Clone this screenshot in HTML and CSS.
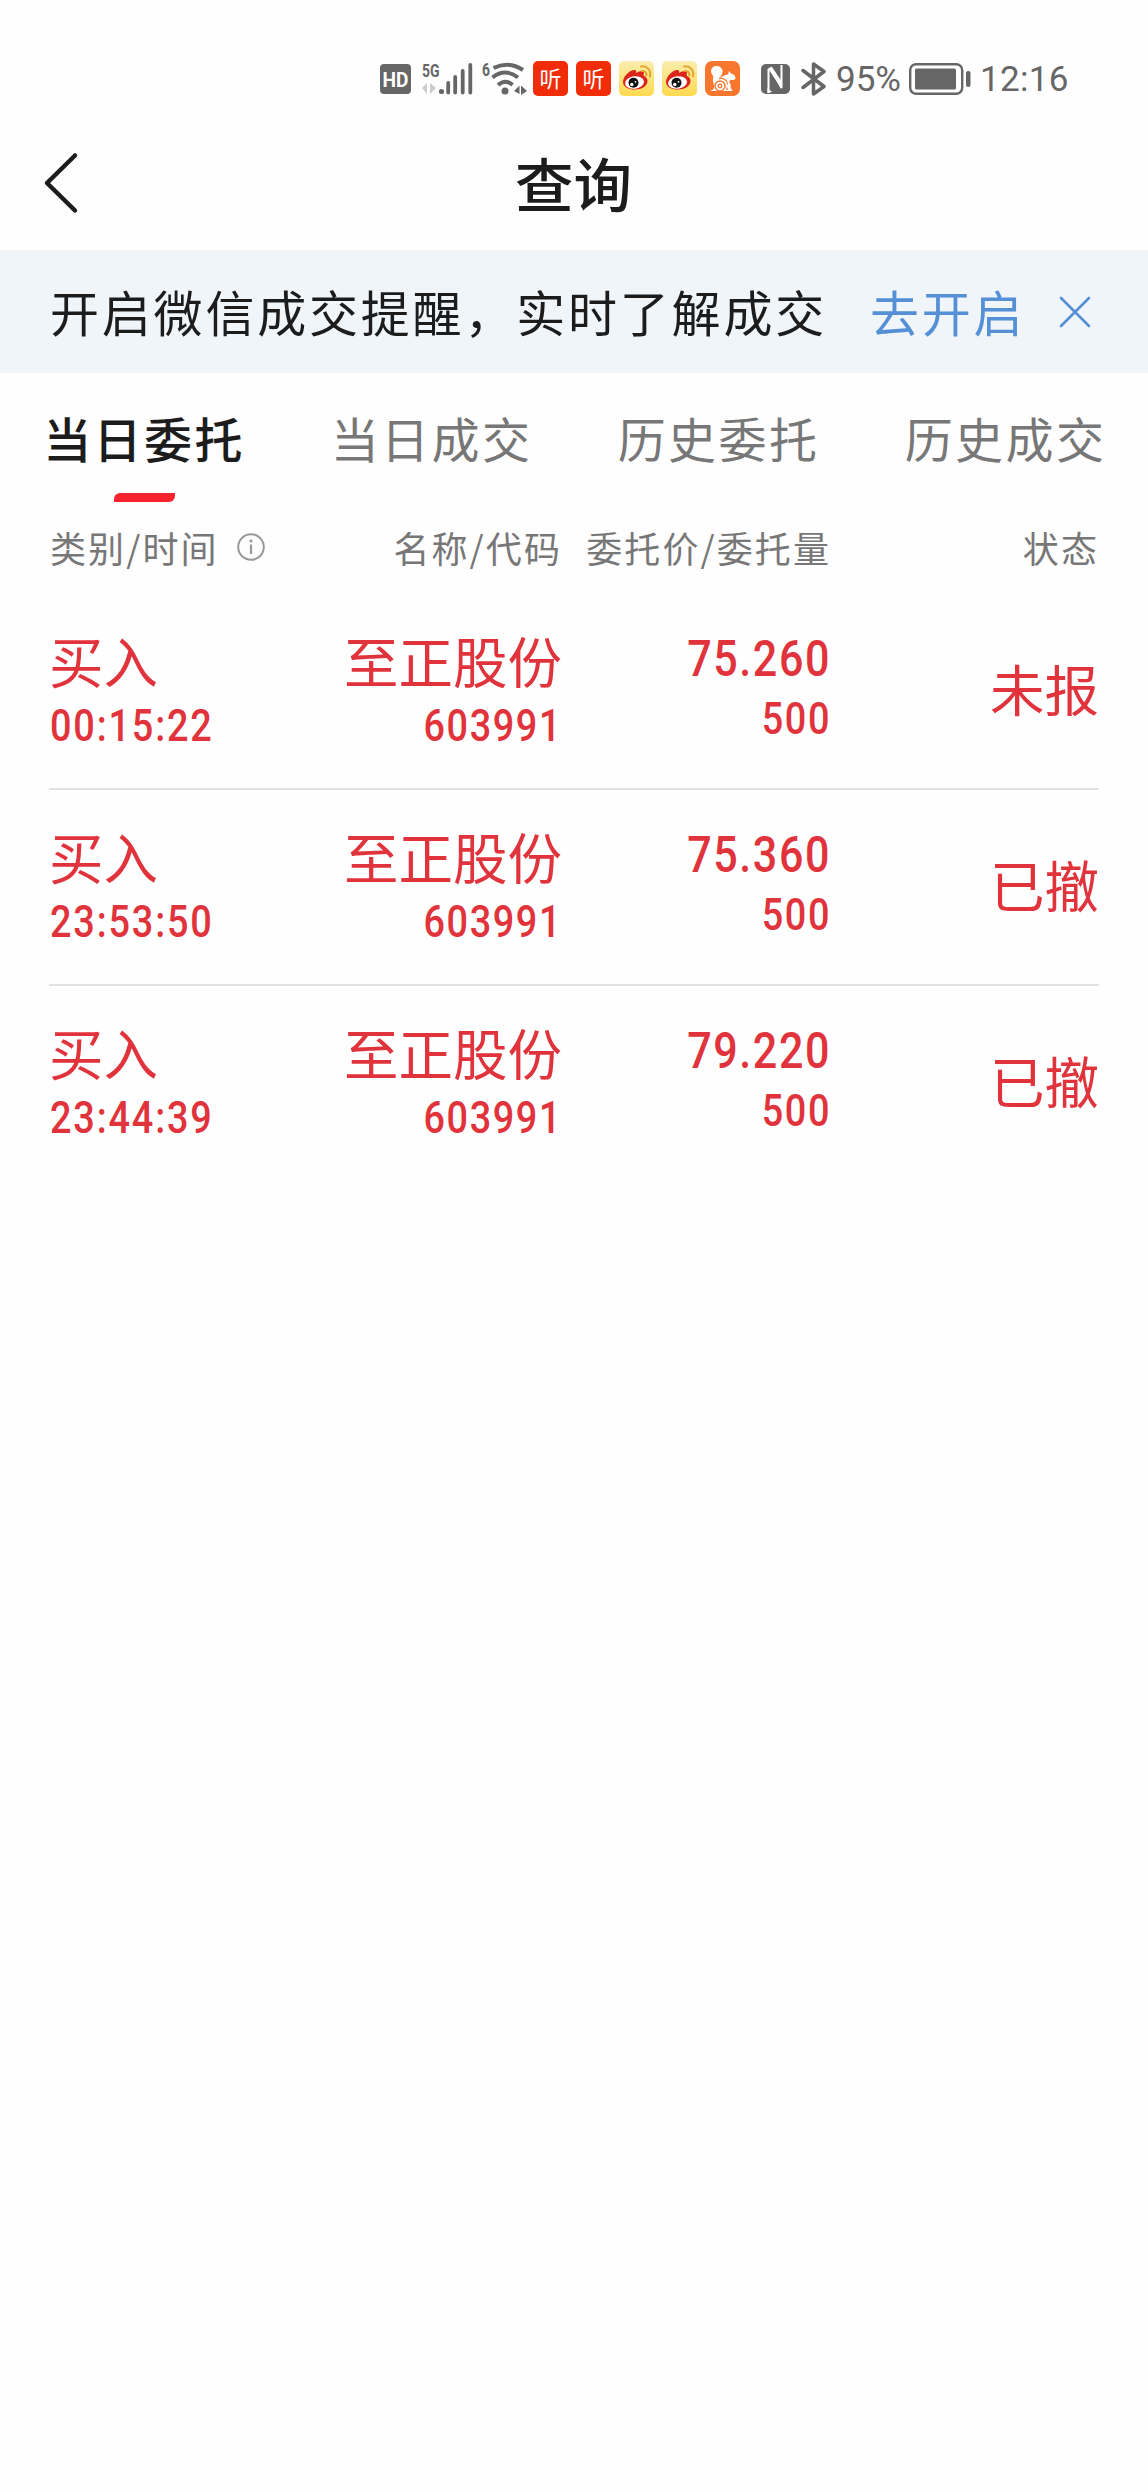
FILE: index.html
```html
<!DOCTYPE html>
<html lang="zh-CN">
<head>
  <meta charset="UTF-8" />
  <meta name="viewport" content="width=device-width, initial-scale=1.0" />
  <title>查询</title>
  <link rel="stylesheet" href="styles.css">
</head>
<body>
  <div class="status-bar">
    <svg class="network" width="148" height="40" viewBox="380 58 148 40">
      <rect x="380" y="63" width="31" height="30" rx="4" fill="#666"/>
      <text x="395.5" y="85.5" class="hd" textLength="26" lengthAdjust="spacingAndGlyphs">HD</text>
      <text x="422" y="76" class="net" textLength="17.5" lengthAdjust="spacingAndGlyphs">5G</text>
      <path d="M422 87l5-5v11M430 82v11l6-6" fill="#ccc"/>
      <circle cx="441.5" cy="90.500" r="2.600" fill="#666"/>
      <path d="M448.200 82v9.500M455.200 76v15.500M462.700 70v21.500M470.300 64v27.500" stroke="#666" stroke-width="3.800" stroke-linecap="round"/>
      <text x="482" y="75" class="net" textLength="8" lengthAdjust="spacingAndGlyphs">6</text>
      <g fill="none" stroke="#666" stroke-width="4">
        <path d="M493.500 67Q508.500 59.500 523 69"/>
        <path d="M492.500 76.500Q505 66.500 518 76.500"/>
        <path d="M498 84Q505.500 77.500 512.500 84"/>
      </g>
      <circle cx="505" cy="90" r="3.500" fill="#666"/>
      <path d="M514 90l5.500-5.500v8.500zM521 84.500l6 5.500-6 4z" fill="#666"/>
    </svg>
    <div class="apps">
      <svg width="35" height="35" viewBox="0 0 35 35">
        <rect width="35" height="35" rx="5" fill="#f12c08"/>
        <text x="17.500" y="25.800" class="ting">听</text>
      </svg>
      <svg width="35" height="35" viewBox="0 0 35 35">
        <rect width="35" height="35" rx="5" fill="#f12c08"/>
        <text x="17.500" y="25.800" class="ting">听</text>
      </svg>
      <svg width="35" height="35" viewBox="0 0 35 35">
        <defs>
          <linearGradient id="gold" x1="0" y1="0" x2="0" y2="1">
            <stop offset="0" stop-color="#f9eeb0"/>
            <stop offset="1" stop-color="#ffd94e"/>
          </linearGradient>
          <g id="weibo">
            <rect width="35" height="35" rx="5" fill="url(#gold)"/>
            <path d="M4 21C4 15 12 8 16 9c2 .5 1 3 1 3 3-2 8-3 8-.500 0 1.500-1 2.500 0 3.500 2 1 3.500 2.500 3.500 5 0 5-6 8.500-12.500 8.500S4 26 4 21z" fill="#dc241b"/>
            <ellipse cx="15.500" cy="21.500" rx="9.500" ry="6.300" fill="#fff" transform="rotate(-7 15.500 21.500)"/>
            <circle cx="14.500" cy="21.800" r="5" fill="#111"/>
            <circle cx="12.800" cy="23.500" r="1.700" fill="#fff"/>
            <circle cx="16.500" cy="20.800" r=".9" fill="#fff"/>
            <path d="M22 5.500c6-1 10.500 4 9 10M23 10c3-.5 5 2 4.200 4.500" fill="none" stroke="#e5a52c" stroke-width="2" stroke-linecap="round"/>
          </g>
        </defs>
        <use href="#weibo"/>
      </svg>
      <svg width="35" height="35" viewBox="0 0 35 35"><use href="#weibo"/></svg>
      <svg width="35" height="35" viewBox="0 0 35 35">
        <rect width="35" height="35" rx="7" fill="#f9762e"/>
        <path d="M5 30c3-.5 4.500-2.500 4-5.500-.5-2.500-1.500-4-1-6.500.3-1.500.7-2.500-.5-4-1.500-2-2-4-1-6C7.500 5.500 10 4.500 12.500 5c3.500.5 5.500 3.500 5 6.500-.5 2.500-2.500 4-2.500 6.500 2-3 5-4 8-4.500l1-3.500 2 2.500c3 .5 4.500 2.500 4.500 4.500s-2.500 2-5 2l-1.500 2c1.500 1.500 2 3 1.500 5 .5 1.500 1.500 2.500 2 4z" fill="#fff"/>
        <circle cx="15" cy="25" r="5" fill="#fff" stroke="#f9762e" stroke-width="1.400"/>
        <circle cx="15" cy="25" r="1.800" fill="none" stroke="#f9762e" stroke-width="1.300"/>
        <path d="M14 17.500c5-.500 8.500 2 8.500 6M22 29v-2.500" fill="none" stroke="#f9762e" stroke-width="1.300"/>
      </svg>
    </div>
    <svg class="nfc" width="29" height="30" viewBox="0 0 29 30">
      <rect width="29" height="30" rx="5" fill="#666"/>
      <path d="M7.500 29V5.500L10 4l10.500 20V1" fill="none" stroke="#fff" stroke-width="2"/>
      <path d="M8 6l3-3 9.500 14v7.500zM6.500 24l4.500 4-4.500 1z" fill="#fff"/>
    </svg>
    <svg class="bluetooth" width="26" height="34" viewBox="0 0 26 34">
      <path d="M2 8.500l21 16-10.500 7.500V2L23 9.500 2 25.500" fill="none" stroke="#666" stroke-width="3.500" stroke-linejoin="round" stroke-linecap="round"/>
    </svg>
    <span class="percent">95%</span>
    <svg class="battery" width="62" height="32" viewBox="0 0 62 32">
      <rect x="1.200" y="1.200" width="52" height="29.600" rx="6" fill="none" stroke="#666" stroke-width="2.400"/>
      <rect x="6" y="5.500" width="41" height="21" rx="1.500" fill="#666"/>
      <rect x="57" y="8" width="4.500" height="16" rx="2" fill="#666"/>
    </svg>
    <span class="clock">12:16</span>
  </div>

  <header class="header">
    <svg class="back" width="40" height="66" viewBox="0 0 40 66">
      <path d="M35 5.500L7 33l28 27.500" fill="none" stroke="#1c1c1c" stroke-width="4.500" stroke-linecap="round" stroke-linejoin="round"/>
    </svg>
    <h1>查询</h1>
  </header>

  <div class="notice">
    <span class="notice-text">开启微信成交提醒，实时了解成交</span>
    <a class="notice-link">去开启</a>
    <svg class="close" width="32" height="32" viewBox="0 0 32 32">
      <path d="M2 2l28 28M30 2L2 30" stroke="#5590d6" stroke-width="2.600" stroke-linecap="round"/>
    </svg>
  </div>

  <nav class="tabs">
    <div class="tab active">当日委托</div>
    <div class="tab">当日成交</div>
    <div class="tab">历史委托</div>
    <div class="tab">历史成交</div>
  </nav>

  <div class="table">
    <div class="table-head">
      <div class="type">类别/时间
        <svg class="info" width="28" height="28" viewBox="0 0 28 28">
          <circle cx="14" cy="14" r="12.800" fill="none" stroke="#999" stroke-width="2"/>
          <path d="M14 11.500V21" stroke="#999" stroke-width="2.200"/>
          <circle cx="14" cy="8" r="1.600" fill="#999"/>
        </svg>
      </div>
      <div>名称/代码</div>
      <div>委托价/委托量</div>
      <div>状态</div>
    </div>

    <div class="row">
      <div class="type"><div class="name">买入</div><div class="num">00:15:22</div></div>
      <div><div class="name">至正股份</div><div class="num">603991</div></div>
      <div class="order"><div class="price">75.260</div><div class="num">500</div></div>
      <div class="state">未报</div>
    </div>
    <div class="row">
      <div class="type"><div class="name">买入</div><div class="num">23:53:50</div></div>
      <div><div class="name">至正股份</div><div class="num">603991</div></div>
      <div class="order"><div class="price">75.360</div><div class="num">500</div></div>
      <div class="state">已撤</div>
    </div>
    <div class="row">
      <div class="type"><div class="name">买入</div><div class="num">23:44:39</div></div>
      <div><div class="name">至正股份</div><div class="num">603991</div></div>
      <div class="order"><div class="price">79.220</div><div class="num">500</div></div>
      <div class="state">已撤</div>
    </div>
  </div>
</body>
</html>
```
FILE: styles.css
```css
* {
  box-sizing: border-box;
}
body {
  margin: 0;
  min-height: 2492px;
  background: #fefefe;
  font-family: "Noto Sans CJK SC", sans-serif;
  color: #1c1c1c;
  white-space: nowrap;
}
svg {
  display: block;
  flex: none;
}

/* status bar */
.status-bar {
  display: flex;
  align-items: center;
  height: 131px;
  padding: 26px 0 0 380px;
  color: #666;
  font: 35px/38px Roboto, sans-serif;
}
.hd {
  font: bold 21px Roboto, sans-serif;
  fill: #fff;
  text-anchor: middle;
}
.net {
  font: bold 19px Roboto, sans-serif;
  fill: #666;
}
.ting {
  font: 22px "Noto Sans CJK SC", sans-serif;
  fill: #fff;
  text-anchor: middle;
}
.apps {
  display: flex;
  gap: 8px;
  margin-left: 5px;
}
.nfc {
  margin-left: 21px;
}
.bluetooth {
  margin-left: 11px;
}
.percent {
  width: 73px;
  margin-left: 9px;
  padding-top: 2px;
}
.clock {
  margin-left: 9px;
  padding-top: 2px;
  letter-spacing: .3px;
}

/* title */
.header {
  display: grid;
  grid-template-columns: 80px 1fr 80px;
  align-items: center;
  height: 119px;
  padding-bottom: 15px;
}
.back {
  margin-left: 40px;
}
.header h1 {
  margin: 0 1px 2px 0;
  font-size: 58.5px;
  line-height: 70px;
  font-weight: 500;
  text-align: center;
}

/* wechat notice */
.notice {
  display: flex;
  align-items: center;
  height: 123px;
  padding-left: 50px;
  background: #f0f5fa;
  font-size: 49px;
  line-height: 60px;
  letter-spacing: 2.8px;
}
.notice-text, .notice-link {
  padding-bottom: 2px;
}
.notice-text {
  width: 820px;
}
.notice-link {
  width: 189px;
  color: #5590d6;
}

/* tabs */
.tabs {
  display: grid;
  grid-template-columns: repeat(4, 1fr);
  height: 130px;
  padding-top: 31px;
}
.tab {
  padding-left: 2px;
  font-size: 48px;
  line-height: 66px;
  letter-spacing: 2.4px;
  text-align: center;
  color: #777;
}
.tab.active {
  padding-left: 1px;
  font-weight: 500;
  color: #1c1c1c;
}
.tab.active::after {
  content: "";
  display: block;
  width: 61px;
  height: 9px;
  margin: 23px auto 0;
  border-radius: 6px 0;
  background: #f8232d;
}

/* orders */
.table {
  padding: 0 49px;
}
.table-head, .row {
  display: grid;
  grid-template-columns: 182px 331px 269px 268px;
  text-align: right;
}
.table-head {
  height: 91px;
  padding-top: 19px;
  font-size: 36px;
  line-height: 50px;
  letter-spacing: 2.1px;
  color: #777;
}
.table-head .type {
  display: flex;
  align-items: center;
  align-self: start;
}
.info {
  margin-left: 18px;
}
.type {
  padding-left: 1px;
  text-align: left;
}
.row {
  height: 196px;
  padding-top: 36px;
  border-bottom: 2px solid #e1e1e1;
  color: #e0333b;
}
.row:last-child {
  border-bottom: none;
}
.type .name {
  margin-left: -1px;
}
.name, .state {
  font-size: 54.5px;
  line-height: 60px;
}

/* narrow digits */
.num, .price {
  font-family: Roboto, sans-serif;
  font-weight: 500;
  transform: scaleX(.87);
  transform-origin: right;
}
.type .num {
  transform-origin: left;
  letter-spacing: 2.1px;
}
.num {
  margin-top: 12px;
  font-size: 43.5px;
  line-height: 50px;
  letter-spacing: 1.8px;
}
.price {
  padding-top: 1px;
  font-size: 49.5px;
  line-height: 56px;
  letter-spacing: 1.8px;
}
.order .num {
  margin-top: 8px;
}
.state {
  padding-top: 28px;
}
```
